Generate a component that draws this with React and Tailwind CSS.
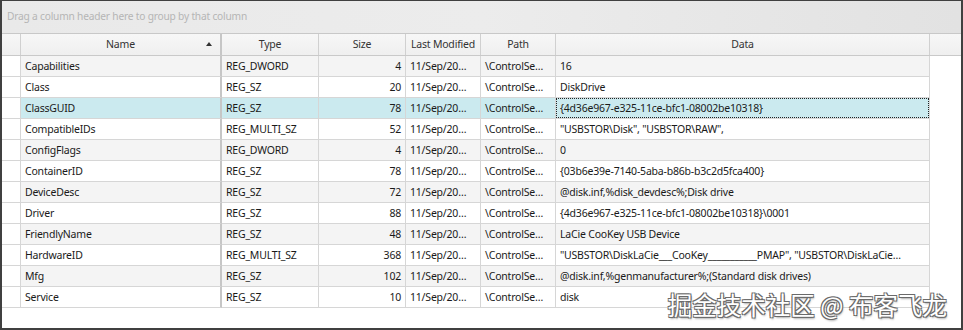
const rows = [
  ['Capabilities', 'REG_DWORD', 4, '16'],
  ['Class', 'REG_SZ', 20, 'DiskDrive'],
  ['ClassGUID', 'REG_SZ', 78, '{4d36e967-e325-11ce-bfc1-08002be10318}'],
  ['CompatibleIDs', 'REG_MULTI_SZ', 52, '"USBSTOR\\Disk", "USBSTOR\\RAW",'],
  ['ConfigFlags', 'REG_DWORD', 4, '0'],
  ['ContainerID', 'REG_SZ', 78, '{03b6e39e-7140-5aba-b86b-b3c2d5fca400}'],
  ['DeviceDesc', 'REG_SZ', 72, '@disk.inf,%disk_devdesc%;Disk drive'],
  ['Driver', 'REG_SZ', 88, '{4d36e967-e325-11ce-bfc1-08002be10318}\\0001'],
  ['FriendlyName', 'REG_SZ', 48, 'LaCie CooKey USB Device'],
  ['HardwareID', 'REG_MULTI_SZ', 368, '"USBSTOR\\DiskLaCie___CooKey___________PMAP", "USBSTOR\\DiskLaCie…'],
  ['Mfg', 'REG_SZ', 102, '@disk.inf,%genmanufacturer%;(Standard disk drives)'],
  ['Service', 'REG_SZ', 10, 'disk'],
];

const cols = 'grid grid-cols-[19px_201px_97px_87px_75px_75px_374px_1fr]';

export default function App() {
  return (
    <div className="relative h-[330px] w-[963px] overflow-hidden border-x-2 border-b-2 border-t border-[#404040] bg-white font-['Noto_Sans','Liberation_Sans',sans-serif] text-[10.5px] tracking-[-0.2px] text-[#1a1a1a]">
      <div className="flex h-[33px] items-center border-b border-[#c8c8c8] bg-gradient-to-r from-[#e9e9e9] via-[#ececec] to-[#e2e2e2] pl-[5px] text-[10.2px] text-[#b5b5b5]">
        Drag a column header here to group by that column
      </div>

      <div className={`${cols} h-[22px] border-b border-[#c9c9c9] bg-gradient-to-b from-[#f7f7f7] to-[#efefef] text-[#333]`}>
        <div className="border-r border-[#d0d0d0]" />
        <div className="relative flex items-center justify-center border-r-2 border-[#c6c6c6]">
          Name
          <span className="absolute right-[8px] top-[8px] h-0 w-0 border-x-[3.5px] border-b-[4px] border-x-transparent border-b-[#333]" />
        </div>
        <div className="flex items-center justify-center border-r border-[#d0d0d0]">Type</div>
        <div className="flex items-center justify-center border-r border-[#d0d0d0]">Size</div>
        <div className="flex items-center justify-center border-r border-[#d0d0d0]">Last Modified</div>
        <div className="flex items-center justify-center border-r border-[#d0d0d0]">Path</div>
        <div className="flex items-center justify-center border-r border-[#d0d0d0]">Data</div>
        <div />
      </div>

      {rows.map(([name, type, size, data], i) => {
        const selected = i === 2;
        const bg = selected ? 'bg-[#cbeaef]' : i % 2 === 0 ? 'bg-[#f4f4f4]' : 'bg-white';
        return (
          <div key={name} className={`${cols} h-[21px] leading-[20px]`}>
            <div className="border-b border-r border-[#d6d6d6] bg-white" />
            <div className={`truncate border-b border-r-2 border-[#d6d6d6] border-r-[#c6c6c6] pl-[4px] ${bg}`}>{name}</div>
            <div className={`truncate border-b border-r border-[#d6d6d6] pl-[4px] ${bg}`}>{type}</div>
            <div className={`border-b border-r border-[#d6d6d6] pr-[4px] text-right ${bg}`}>{size}</div>
            <div className={`overflow-hidden whitespace-nowrap border-b border-r border-[#d6d6d6] pl-[4px] ${bg}`}>11/Sep/20…</div>
            <div className={`overflow-hidden whitespace-nowrap border-b border-r border-[#d6d6d6] pl-[4px] ${bg}`}>\ControlSe…</div>
            <div className={`border-b border-r border-[#d6d6d6] ${bg}`}>
              <div className={`h-full overflow-hidden whitespace-nowrap pl-[3px] leading-[18px] ${selected ? 'border border-dotted border-[#222]' : 'border border-transparent'}`}>
                {data}
              </div>
            </div>
            <div />
          </div>
        );
      })}

      <div className="absolute bottom-[11px] right-[14px] font-['Noto_Sans_CJK_SC',sans-serif] text-[24.5px] leading-none tracking-normal text-white [text-shadow:1px_1px_0_#6a6a6a,-1px_-1px_0_#6a6a6a,1px_-1px_0_#6a6a6a,-1px_1px_0_#6a6a6a,1px_2px_2px_#aaa]">
        掘金技术社区 @ 布客飞龙
      </div>
    </div>
  );
}
